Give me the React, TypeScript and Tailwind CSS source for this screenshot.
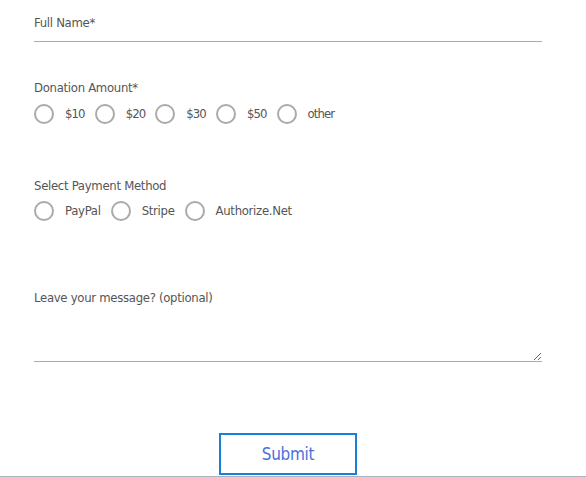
const amounts = ["$10", "$20", "$30", "$50", "other"];
const methods = ["PayPal", "Stripe", "Authorize.Net"];

function Radio({ label, name }: { label: string; name: string }) {
  return (
    <label className="flex items-center gap-[11px] mr-[10px]">
      <span className="w-[20px] h-[20px] rounded-full border-2 border-[#aaaaaa] bg-white" />
      <span>{label}</span>
      <input type="radio" name={name} className="hidden" />
    </label>
  );
}

export default function App() {
  return (
    <div
      className="w-[586px] h-[477px] bg-white text-[#555555] text-[13px] leading-[20px] tracking-[-0.3px] overflow-hidden"
      style={{ fontFamily: '"DejaVu Sans Condensed", "Liberation Sans Narrow", "Roboto", sans-serif' }}
    >
      <form className="w-[508px] ml-[34px] pt-[13px]">
        {/* full name */}
        <div className="h-[29px] border-b border-[#aaaaaa]">Full Name*</div>

        {/* amount */}
        <div className="mt-[36px]">Donation Amount*</div>
        <div className="flex items-center mt-[6px] h-[20px] tracking-[-0.9px]">
          {amounts.map((a) => (
            <Radio key={a} label={a} name="amount" />
          ))}
        </div>

        {/* payment */}
        <div className="mt-[52px]">Select Payment Method</div>
        <div className="flex items-center mt-[5px] h-[20px]">
          {methods.map((m) => (
            <Radio key={m} label={m} name="method" />
          ))}
        </div>

        {/* message */}
        <div className="mt-[67px]">Leave your message? (optional)</div>
        <textarea className="block w-full h-[54px] border-b border-[#aaaaaa] outline-none resize-y" />
      </form>

      <div className="flex justify-center pr-[10px] mt-[71px] pb-[1px] border-b border-[#a9b4bf]">
        <button className="w-[138px] h-[42px] border-2 border-[#1a7fd6] text-[#4a72d9] text-[17px] tracking-[-0.3px]">
          Submit
        </button>
      </div>
    </div>
  );
}
